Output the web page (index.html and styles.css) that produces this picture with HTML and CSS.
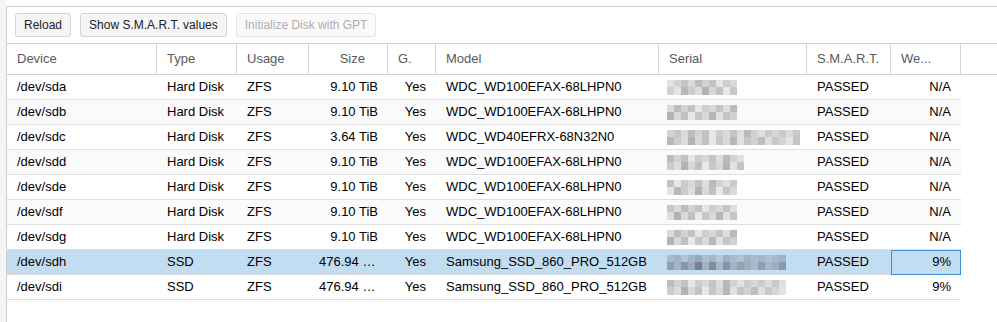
FILE: index.html
```html
<!DOCTYPE html>
<html lang="en">
<head>
  <meta charset="UTF-8" />
  <title>Disks</title>
  <link rel="stylesheet" href="styles.css">
</head>
<body>
<div class="layout">
  <div class="side"></div>
  <div class="main">
    <div class="panel">
      <div class="toolbar">
        <button class="btn">Reload</button>
        <button class="btn">Show S.M.A.R.T. values</button>
        <button class="btn" disabled>Initialize Disk with GPT</button>
      </div>

      <div class="grid-head">
        <div class="hcell">Device</div>
        <div class="hcell">Type</div>
        <div class="hcell">Usage</div>
        <div class="hcell right">Size</div>
        <div class="hcell">G.</div>
        <div class="hcell">Model</div>
        <div class="hcell">Serial</div>
        <div class="hcell">S.M.A.R.T.</div>
        <div class="hcell">We...</div>
        <div class="hcell filler"></div>
      </div>

      <div class="grid-body">
        <div class="row">
          <div class="cell">/dev/sda</div><div class="cell">Hard Disk</div><div class="cell">ZFS</div>
          <div class="cell right">9.10 TiB</div><div class="cell right">Yes</div>
          <div class="cell">WDC_WD100EFAX-68LHPN0</div>
          <div class="cell serial"><span class="mosaic w70 off0"></span></div>
          <div class="cell">PASSED</div><div class="cell right">N/A</div>
        </div>
        <div class="row">
          <div class="cell">/dev/sdb</div><div class="cell">Hard Disk</div><div class="cell">ZFS</div>
          <div class="cell right">9.10 TiB</div><div class="cell right">Yes</div>
          <div class="cell">WDC_WD100EFAX-68LHPN0</div>
          <div class="cell serial"><span class="mosaic w70 off1"></span></div>
          <div class="cell">PASSED</div><div class="cell right">N/A</div>
        </div>
        <div class="row">
          <div class="cell">/dev/sdc</div><div class="cell">Hard Disk</div><div class="cell">ZFS</div>
          <div class="cell right">3.64 TiB</div><div class="cell right">Yes</div>
          <div class="cell">WDC_WD40EFRX-68N32N0</div>
          <div class="cell serial"><span class="mosaic w133 off2"></span></div>
          <div class="cell">PASSED</div><div class="cell right">N/A</div>
        </div>
        <div class="row">
          <div class="cell">/dev/sdd</div><div class="cell">Hard Disk</div><div class="cell">ZFS</div>
          <div class="cell right">9.10 TiB</div><div class="cell right">Yes</div>
          <div class="cell">WDC_WD100EFAX-68LHPN0</div>
          <div class="cell serial"><span class="mosaic w77 off3"></span></div>
          <div class="cell">PASSED</div><div class="cell right">N/A</div>
        </div>
        <div class="row">
          <div class="cell">/dev/sde</div><div class="cell">Hard Disk</div><div class="cell">ZFS</div>
          <div class="cell right">9.10 TiB</div><div class="cell right">Yes</div>
          <div class="cell">WDC_WD100EFAX-68LHPN0</div>
          <div class="cell serial"><span class="mosaic w70 off4"></span></div>
          <div class="cell">PASSED</div><div class="cell right">N/A</div>
        </div>
        <div class="row">
          <div class="cell">/dev/sdf</div><div class="cell">Hard Disk</div><div class="cell">ZFS</div>
          <div class="cell right">9.10 TiB</div><div class="cell right">Yes</div>
          <div class="cell">WDC_WD100EFAX-68LHPN0</div>
          <div class="cell serial"><span class="mosaic w70 off5"></span></div>
          <div class="cell">PASSED</div><div class="cell right">N/A</div>
        </div>
        <div class="row">
          <div class="cell">/dev/sdg</div><div class="cell">Hard Disk</div><div class="cell">ZFS</div>
          <div class="cell right">9.10 TiB</div><div class="cell right">Yes</div>
          <div class="cell">WDC_WD100EFAX-68LHPN0</div>
          <div class="cell serial"><span class="mosaic w70 off1"></span></div>
          <div class="cell">PASSED</div><div class="cell right">N/A</div>
        </div>
        <div class="row selected">
          <div class="cell">/dev/sdh</div><div class="cell">SSD</div><div class="cell">ZFS</div>
          <div class="cell size">476.94 GiB</div><div class="cell right">Yes</div>
          <div class="cell">Samsung_SSD_860_PRO_512GB</div>
          <div class="cell serial"><span class="mosaic w119 blue"></span></div>
          <div class="cell">PASSED</div><div class="cell right focused">9%</div>
        </div>
        <div class="row">
          <div class="cell">/dev/sdi</div><div class="cell">SSD</div><div class="cell">ZFS</div>
          <div class="cell size">476.94 GiB</div><div class="cell right">Yes</div>
          <div class="cell">Samsung_SSD_860_PRO_512GB</div>
          <div class="cell serial"><span class="mosaic w119 off3"></span></div>
          <div class="cell">PASSED</div><div class="cell right">9%</div>
        </div>
      </div>
    </div>
  </div>
</div>
</body>
</html>
```

FILE: styles.css
```css
* {
  box-sizing: border-box;
}
body {
  margin: 0;
  font-family: "Liberation Sans", Arial, sans-serif;
  font-size: 13px;
  color: #000;
  background: #fff;
  height: 322px;
  overflow: hidden;
}
.layout {
  display: flex;
  height: 100%;
}
.side {
  width: 6px;
  background: #f5f5f5;
}
.main {
  flex: 1;
  padding-top: 6px;
}
.panel {
  height: 100%;
  border-top: 1px solid #d0d0d0;
  border-left: 1px solid #d0d0d0;
}

/* toolbar */
.toolbar {
  display: flex;
  gap: 9px;
  padding: 6px 8px;
  height: 37px;
  border-bottom: 1px solid #d0d0d0;
}
.btn {
  height: 24px;
  padding: 0 8px;
  font-family: inherit;
  font-size: 12px;
  color: #222;
  background: #f5f5f5;
  border: 1px solid #d3d3d3;
  border-radius: 3px;
}
.btn:disabled {
  color: #adadad;
  background: #fafafa;
  border-color: #e4e4e4;
}

/* grid */
.grid-head,
.row {
  display: grid;
  grid-template-columns: 150px 80px 72px 79px 48px 223px 148px 84px 70px;
}
.grid-head {
  grid-template-columns: 150px 80px 72px 79px 48px 223px 148px 84px 70px 1fr;
  height: 31px;
  border-bottom: 1px solid #cfcfcf;
}
.hcell {
  padding: 0 10px;
  line-height: 30px;
  color: #5a5a5a;
  border-right: 1px solid #d4d4d4;
  white-space: nowrap;
  overflow: hidden;
}
.hcell.right {
  text-align: right;
  padding-right: 22px;
}
.hcell.filler {
  border-right: none;
}
.row {
  width: 954px;
  height: 25px;
  border-bottom: 1px solid #dedede;
}
.row:nth-child(even) {
  background: #fafafa;
}
.row.selected {
  background: #c2ddf2;
}
.cell {
  padding: 0 10px;
  line-height: 24px;
  white-space: nowrap;
  overflow: hidden;
  text-overflow: ellipsis;
}
.cell.right {
  text-align: right;
}
.cell.focused {
  outline: 1px solid #3f91d4;
  outline-offset: -1px;
  height: 25px;
}

/* blurred serial numbers */
.cell.serial {
  display: flex;
  align-items: center;
  padding: 0 4px 0 8px;
}
.mosaic {
  display: block;
  height: 15px;
  background-image:
    linear-gradient(90deg, #e2e2e2 0 7px, #d4d4d4 7px 14px, #c6c6c6 14px 21px, #dadada 21px 28px, #bdbdbd 28px 35px, #cfd3d6 35px 42px, #c2c2c2 42px 49px, #e6e6e6 49px 56px, #cdcdcd 56px 63px, #d8d8d8 63px 70px, #c4c4c4 70px 77px, #dedede 77px 84px, #bababa 84px 91px, #d2d2d2 91px 98px, #e0e0e0 98px 105px, #c8ccd0 105px 112px, #d6d6d6 112px 119px, #cbcbcb 119px 126px, #dcdcdc 126px 133px, #c9c9c9 133px 140px, #e0e0e0 140px 147px, #cfcfcf 147px 154px, #d8d8d8 154px 161px),
    linear-gradient(90deg, #d0d0d0 0 7px, #e4e4e4 7px 14px, #b8b8b8 14px 21px, #cccccc 21px 28px, #dddddd 28px 35px, #b3b3b3 35px 42px, #d6d9dc 42px 49px, #c1c1c1 49px 56px, #e8e8e8 56px 63px, #c7c7c7 63px 70px, #d9d9d9 70px 77px, #b6b6b6 77px 84px, #e2e2e2 84px 91px, #c3c6c9 91px 98px, #d1d1d1 98px 105px, #bebebe 105px 112px, #dfdfdf 112px 119px, #c9c9c9 119px 126px, #d5d5d5 126px 133px, #e3e3e3 133px 140px, #c4c4c4 140px 147px, #d9d9d9 147px 154px, #cdcdcd 154px 161px);
  background-size: 161px 7px, 161px 8px;
  background-repeat: no-repeat;
  background-position: 0 0, 0 7px;
}
.mosaic.w70 { width: 70px; }
.mosaic.w77 { width: 77px; }
.mosaic.w119 { width: 119px; }
.mosaic.w133 { width: 133px; }
.mosaic.off1 { background-position: -21px 0, -35px 7px; }
.mosaic.off2 { background-position: -7px 0, -14px 7px; }
.mosaic.off3 { background-position: -28px 0, -21px 7px; }
.mosaic.off4 { background-position: -42px 0, -7px 7px; }
.mosaic.off5 { background-position: -14px 0, -28px 7px; }
.mosaic.blue {
  background-image:
    linear-gradient(90deg, #a9bccd 0 7px, #9fb4c6 7px 14px, #b3c5d5 14px 21px, #a2b5c6 21px 28px, #96aabb 28px 35px, #aebfd0 35px 42px, #a4b7c8 42px 49px, #b5c7d7 49px 56px, #9cb0c1 56px 63px, #a9bbcc 63px 70px, #b1c3d3 70px 77px, #9fb2c3 77px 84px, #aabdcd 84px 91px, #a4b6c7 91px 98px, #b0c2d2 98px 105px, #a6b9ca 105px 112px, #a0b3c4 112px 119px),
    linear-gradient(90deg, #8d9fb0 0 7px, #a3b6c7 7px 14px, #8797a8 14px 21px, #9aaabb 21px 28px, #7e7e9c 28px 35px, #a0b2c3 35px 42px, #7f8e9d 42px 49px, #a6b8c9 49px 56px, #8494a5 56px 63px, #a1b3c4 63px 70px, #91a2b2 70px 77px, #9cadbe 77px 84px, #a8bacb 84px 91px, #8e9fb0 91px 98px, #a3b5c6 98px 105px, #9badbe 105px 112px, #8899aa 112px 119px);
  background-size: 119px 7px, 119px 8px;
}
```
